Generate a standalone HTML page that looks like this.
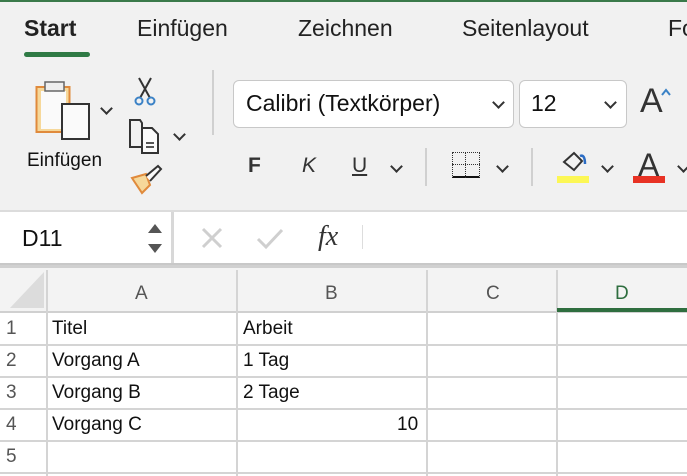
<!DOCTYPE html><html><head><meta charset="utf-8"><style>
body{margin:0;width:687px;height:476px;overflow:hidden;background:#f1f1f1;font-family:"Liberation Sans",sans-serif;position:relative}
.a{position:absolute}
.tab{position:absolute;top:15px;font-size:23px;color:#222}
.box{position:absolute;background:#fff;border:1px solid #c8c8c8;border-radius:6px}
.chev{position:absolute;width:7px;height:7px;border-right:2.5px solid #333;border-bottom:2.5px solid #333;transform:rotate(45deg)}
.hl{position:absolute;left:0;width:687px;height:2px;background:#d4d4d4}
.vl{position:absolute;top:270px;width:2px;height:206px;background:#d4d4d4}
.c{position:absolute;font-size:19px;color:#111}
.h{position:absolute;font-size:19px;color:#555;top:283px}
</style></head><body>
<div class="a" style="left:0;top:0;width:687px;height:2px;background:#3a7a4a"></div>
<div class="tab" style="left:24px;font-weight:bold">Start</div>
<div class="a" style="left:24px;top:52px;width:66px;height:5px;border-radius:3px;background:#2f7a45"></div>
<div class="tab" style="left:137px">Einfügen</div>
<div class="tab" style="left:298px">Zeichnen</div>
<div class="tab" style="left:462px">Seitenlayout</div>
<div class="tab" style="left:668px">Fo</div>
<!-- paste icon -->
<svg class="a" style="left:30px;top:78px" width="64" height="64"><rect x="6.5" y="9" width="33" height="45" fill="#f6d89a" stroke="#e08a3c" stroke-width="2"/><rect x="11" y="13" width="25" height="38" fill="#fafafa"/><rect x="15" y="4" width="19" height="9" fill="#eee" stroke="#666" stroke-width="1.5"/><rect x="32" y="26" width="27" height="35" fill="#fafafa" stroke="#333" stroke-width="2"/></svg>
<div class="chev" style="left:102px;top:104px"></div>
<div class="a" style="left:27px;top:150px;font-size:19px;color:#111">Einfügen</div>
<!-- scissors -->
<svg class="a" style="left:132px;top:76px" width="28" height="32"><path d="M7 2 L18 22 M19 2 L8 22" stroke="#333" stroke-width="2" fill="none"/><circle cx="7" cy="25" r="3.5" stroke="#3b82c6" stroke-width="2" fill="none"/><circle cx="19" cy="25" r="3.5" stroke="#3b82c6" stroke-width="2" fill="none"/></svg>
<!-- copy -->
<svg class="a" style="left:128px;top:119px" width="36" height="36"><path d="M2 1 H12 L14 4 V28 H2 Z" fill="none" stroke="#333" stroke-width="2"/><path d="M14 9 H24 L30 15 V34 H14 Z" fill="#fafafa" stroke="#333" stroke-width="2"/><path d="M18 24 H26 M18 28 H26" stroke="#555" stroke-width="2"/></svg>
<div class="chev" style="left:175px;top:130px"></div>
<!-- brush -->
<svg class="a" style="left:128px;top:163px" width="36" height="32"><path d="M4 15 L18 11 L22 22 L14 30 Z" fill="#f6d89a" stroke="#e08a3c" stroke-width="2"/><path d="M18 13 L30 3 L33 6 L22 18" fill="#fafafa" stroke="#333" stroke-width="2"/></svg>
<div class="a" style="left:212px;top:70px;width:2px;height:65px;background:#d0d0d0"></div>
<div class="box" style="left:233px;top:80px;width:279px;height:46px"></div>
<div class="a" style="left:246px;top:90px;font-size:23px;color:#111">Calibri (Textkörper)</div>
<div class="chev" style="left:494px;top:98px"></div>
<div class="box" style="left:519px;top:80px;width:106px;height:46px"></div>
<div class="a" style="left:531px;top:90px;font-size:23px;color:#111">12</div>
<div class="chev" style="left:606px;top:98px"></div>
<div class="a" style="left:640px;top:82px;font-size:34px;color:#333">A</div>
<svg class="a" style="left:660px;top:88px" width="14" height="10"><path d="M2 7 L6 2 L10 7" stroke="#3b82c6" stroke-width="2" fill="none"/></svg>
<div class="a" style="left:248px;top:154px;font-size:21px;font-weight:bold;color:#333">F</div>
<div class="a" style="left:302px;top:154px;font-size:21px;font-style:italic;color:#333">K</div>
<div class="a" style="left:352px;top:154px;font-size:21px;text-decoration:underline;color:#333">U</div>
<div class="chev" style="left:392px;top:162px"></div>
<div class="a" style="left:425px;top:148px;width:2px;height:38px;background:#d0d0d0"></div>
<div class="a" style="left:452px;top:152px;width:28px;height:26px;border:1.5px dotted #333;border-bottom:2px solid #111;box-sizing:border-box"></div>
<div class="a" style="left:465px;top:152px;width:0;height:26px;border-left:1.5px dotted #333"></div>
<div class="a" style="left:452px;top:164px;width:28px;height:0;border-top:1.5px dotted #333"></div>
<div class="chev" style="left:498px;top:162px"></div>
<div class="a" style="left:531px;top:148px;width:2px;height:38px;background:#d0d0d0"></div>
<svg class="a" style="left:560px;top:150px" width="30" height="26"><path d="M4 12 L14 3 L22 11 L14 20 Z" fill="none" stroke="#333" stroke-width="2"/><path d="M20 6 Q25 4 25 14" stroke="#2b6cc4" stroke-width="2.5" fill="none"/></svg>
<div class="a" style="left:557px;top:176px;width:32px;height:7px;background:#fcf755"></div>
<div class="chev" style="left:603px;top:162px"></div>
<div class="a" style="left:638px;top:147px;font-size:32px;color:#333">A</div>
<div class="a" style="left:633px;top:176px;width:32px;height:7px;background:#e83224"></div>
<div class="chev" style="left:679px;top:162px"></div>
<!-- formula bar -->
<div class="a" style="left:0;top:210px;width:687px;height:2px;background:#dcdcdc"></div>
<div class="a" style="left:0;top:212px;width:687px;height:52px;background:#fff"></div>
<div class="a" style="left:171px;top:212px;width:3px;height:52px;background:#d8d8d8"></div>
<div class="a" style="left:0;top:263px;width:687px;height:2px;background:#c8c8c8"></div>
<div class="a" style="left:22px;top:225px;font-size:23px;color:#111">D11</div>
<svg class="a" style="left:146px;top:222px" width="18" height="34"><path d="M2 11 L9 2 L16 11 Z M2 22 L9 31 L16 22 Z" fill="#555"/></svg>
<svg class="a" style="left:200px;top:226px" width="90" height="26"><path d="M3 3 L21 21 M21 3 L3 21" stroke="#cfcfcf" stroke-width="3"/><path d="M58 13 L66 21 L82 4" stroke="#cfcfcf" stroke-width="3" fill="none"/></svg>
<div class="a" style="left:318px;top:221px;font-size:28px;font-style:italic;font-family:'Liberation Serif',serif;color:#333">fx</div>
<div class="a" style="left:362px;top:225px;width:1px;height:24px;background:#ddd"></div>
<!-- grid -->
<div class="a" style="left:0;top:265px;width:687px;height:211px;background:#fff"></div>
<div class="a" style="left:0;top:268px;width:687px;height:44px;background:#f3f3f3"></div>
<div class="a" style="left:0;top:265px;width:687px;height:3px;background:#d0d0d0"></div>
<svg class="a" style="left:10px;top:272px" width="34" height="36"><path d="M34 0 V36 H0 Z" fill="#dcdcdc"/></svg>
<div class="hl" style="top:311px;background:#d0d0d0"></div>
<div class="hl" style="top:344px"></div><div class="hl" style="top:376px"></div><div class="hl" style="top:408px"></div><div class="hl" style="top:440px"></div><div class="hl" style="top:472px"></div>
<div class="vl" style="left:46px"></div><div class="vl" style="left:236px"></div><div class="vl" style="left:426px"></div><div class="vl" style="left:556px"></div>
<div class="a" style="left:557px;top:308px;width:130px;height:4px;background:#2f6e3f"></div>
<div class="h" style="left:135px">A</div><div class="h" style="left:325px">B</div><div class="h" style="left:486px">C</div>
<div class="h" style="left:615px;color:#2f6e3f">D</div>
<div class="c" style="left:6px;top:318px;color:#555">1</div>
<div class="c" style="left:6px;top:350px;color:#555">2</div>
<div class="c" style="left:6px;top:382px;color:#555">3</div>
<div class="c" style="left:6px;top:414px;color:#555">4</div>
<div class="c" style="left:6px;top:446px;color:#555">5</div>
<div class="c" style="left:52px;top:318px">Titel</div><div class="c" style="left:243px;top:318px">Arbeit</div>
<div class="c" style="left:52px;top:350px">Vorgang A</div><div class="c" style="left:243px;top:350px">1 Tag</div>
<div class="c" style="left:52px;top:382px">Vorgang B</div><div class="c" style="left:243px;top:382px">2 Tage</div>
<div class="c" style="left:52px;top:414px">Vorgang C</div><div class="c" style="left:397px;top:414px">10</div>
</body></html>
